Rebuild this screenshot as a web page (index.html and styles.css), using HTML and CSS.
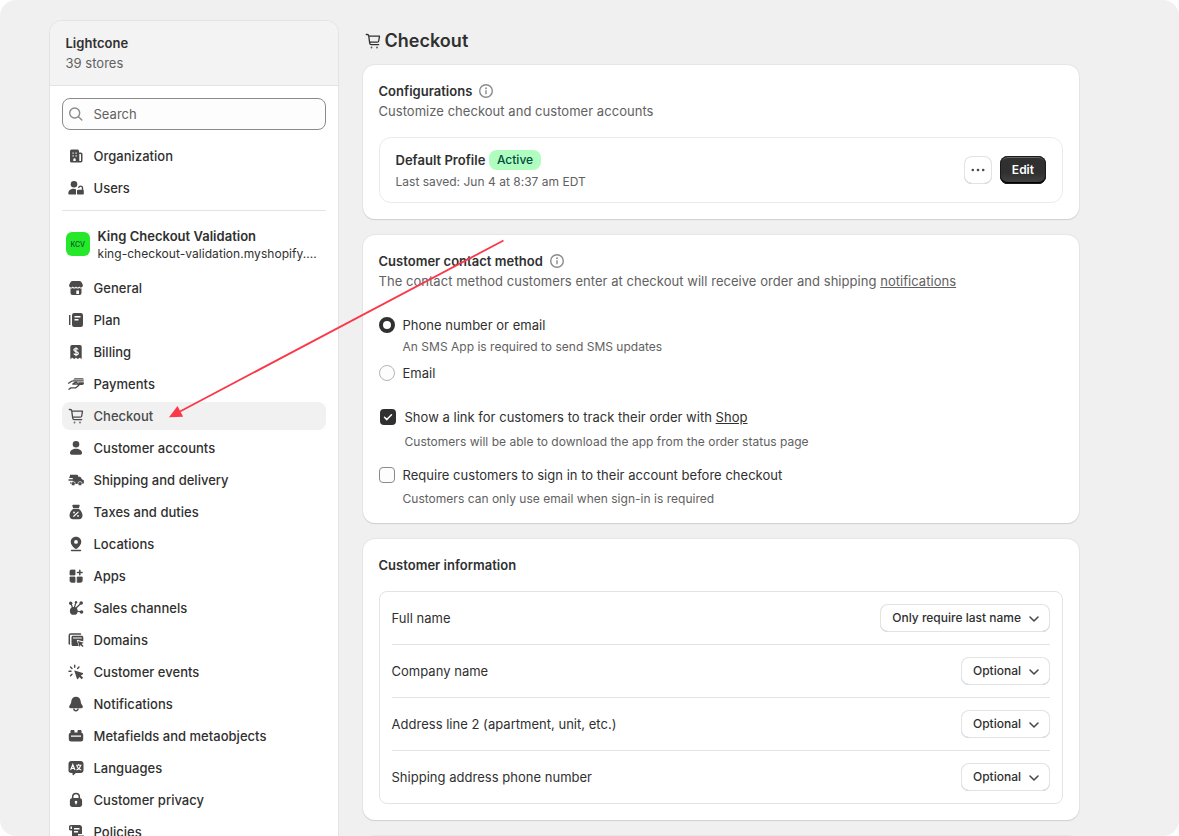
FILE: index.html
```
<!DOCTYPE html>
<html lang="en">
<head>
	<meta charset="UTF-8">
	<meta name="viewport" content="width=device-width, initial-scale=1.0">
	<link rel="stylesheet" href="styles.css">
	<title>Settings | Checkout</title>
</head>
<body>
	<svg class="sprite" aria-hidden="true">
		<symbol id="cart" viewBox="0 0 20 20">
			<path d="M3.300 3.500h1c.8 0 1.300.5 1.400 1.200l1 7.500c.1.800.7 1.400 1.500 1.400h7.500M5.800 5.200h10.700l-.8 4.800c-.1.700-.6 1.100-1.300 1.100H6.600" fill="none" stroke="currentColor" stroke-width="1.300" stroke-linecap="round" stroke-linejoin="round"/>
			<circle cx="8.500" cy="16.500" r=".9" opacity=".8"/><circle cx="14" cy="16.500" r=".9" opacity=".8"/>
		</symbol>
		<symbol id="info" viewBox="0 0 20 20">
			<circle cx="10" cy="10" r="6.300" fill="none" stroke="currentColor" stroke-width="1.400"/>
			<path d="M9.300 9.300h1.400v4H9.300z"/><circle cx="10" cy="7.200" r=".95"/>
		</symbol>
		<symbol id="down" viewBox="0 0 20 20">
			<path d="M6 9l4 4 4-4" fill="none" stroke="currentColor" stroke-width="1.600" stroke-linecap="round" stroke-linejoin="round"/>
		</symbol>
	</svg>
	<div class="page">
		<div class="sidebar">
			<div class="side-head">
				<h3>Lightcone</h3>
				<p>39 stores</p>
			</div>
			<div class="side-body">
				<div class="search">
					<svg class="icon" viewBox="0 0 20 20"><path d="M13.700 9a5 5 0 1 1-10 0 5 5 0 0 1 10 0zM12.500 12.700l3.300 3.300" fill="none" stroke="currentColor" stroke-width="1.400" stroke-linecap="round"/></svg>
					<span>Search</span>
				</div>
				<ul class="nav">
					<li><svg class="icon" viewBox="0 0 20 20"><path fill-rule="evenodd" d="M5.500 3.500h6a1.500 1.500 0 0 1 1.500 1.500v1.500h1.800c1 0 1.700.8 1.700 1.700v6.600c0 1-.8 1.700-1.700 1.700H5.500A1.500 1.500 0 0 1 4 15V5a1.500 1.500 0 0 1 1.500-1.500zM6.500 6.500v1.200h1.200V6.500zm3 0v1.200h1.200V6.500zM6.500 9.300v1.200h1.200V9.300zm3 0v1.200h1.200V9.300zM7.300 15h2.400v-1.500a1.200 1.200 0 0 0-2.400 0zM13.300 8v7h1.100c.4 0 .6-.2.6-.6V8.600c0-.4-.2-.6-.6-.6z"/></svg><span>Organization</span></li>
					<li><svg class="icon" viewBox="0 0 20 20"><circle cx="8" cy="6.200" r="3.300"/><path d="M2.300 15.200c0-2.800 2.400-4.500 5.400-4.500 1.100 0 1.900.2 2.300.5v5.300H3.500c-.7 0-1.200-.6-1.200-1.300z"/><rect x="11" y="11.700" width="6.800" height="4.900" rx="1.200"/><path d="M12.600 9.800c.3-1.200 1.100-1.700 1.900-1.700 1.100 0 2 .8 2 2v2" fill="none" stroke="currentColor" stroke-width="1.400"/></svg><span>Users</span></li>
				</ul>
				<div class="store">
					<div class="avatar">KCV</div>
					<div class="store-info">
						<h3>King Checkout Validation</h3>
						<p>king-checkout-validation.myshopify....</p>
					</div>
				</div>
				<ul class="nav">
					<li><svg class="icon" viewBox="0 0 20 20"><path d="M6.500 2.900h7c.7 0 1.300.3 1.700.9l1.500 2.700c.6 1.600-.3 3-1.900 3-.9 0-1.300-.5-1.600-1-.4.6-.9 1-1.600 1s-1.200-.4-1.600-1c-.4.6-.9 1-1.600 1s-1.200-.4-1.600-1c-.3.5-.8 1-1.700 1-1.600 0-2.400-1.400-1.800-3l1.500-2.700c.4-.6 1-.9 1.700-.9z"/><path fill-rule="evenodd" d="M4.500 10.600c1 0 1.700-.2 2.200-.6.9.7 2.300.7 3.300 0 1 .7 2.400.7 3.300 0 .5.400 1.200.6 2.200.6V15a2 2 0 0 1-2 2h-7a2 2 0 0 1-2-2zM10.300 12.500V16h2.700v-3.500z"/></svg><span>General</span></li>
					<li><svg class="icon" viewBox="0 0 20 20"><path d="M3 5h1.400v10H3z"/><path fill-rule="evenodd" d="M8.200 3h6.600A2.200 2.200 0 0 1 17 5.200v9.600a2.200 2.200 0 0 1-2.200 2.200H8.200A2.200 2.200 0 0 1 6 14.800V5.200A2.200 2.200 0 0 1 8.200 3zM8.500 6v1.400h6V6zm0 3v1.400h4V9z"/></svg><span>Plan</span></li>
					<li><svg class="icon" viewBox="0 0 20 20"><path d="M6 3h8a1.700 1.700 0 0 1 1.700 1.700V17l-2-1.300-1.800 1.300-1.900-1.300L8.100 17l-1.800-1.300-2 1.300V4.700A1.700 1.700 0 0 1 6 3z"/><path d="M12.200 7.500c-.4-.7-1.200-1-2.200-1-1.200 0-2.100.6-2.100 1.500 0 2.300 4.400.8 4.400 3.200 0 1-.9 1.600-2.200 1.600-1.100 0-2-.4-2.400-1.200M10 5.200v9" fill="none" stroke="#fff" stroke-width="1.200"/></svg><span>Billing</span></li>
					<li><svg class="icon" viewBox="0 0 20 20"><path d="M8.700 4.300h7.500c1 0 1.600.5 1.700 1.300H7zM12 8.200h5.900v1c0 1-.7 1.700-1.700 1.700h-5.400l1.300-1.100c.5-.5.4-1.200-.1-1.600z"/><path d="M2.600 9.200l3-2c.5-.3 1-.4 1.500-.4H17.200M11 8.300H9.200L6.800 10h3.500c.6 0 1-.2 1.400-.5M3 15.300l2-1.400h3.500c.8 0 1.500-.2 2-.7l2.500-2.200" fill="none" stroke="currentColor" stroke-width="1.300" stroke-linecap="round" stroke-linejoin="round"/></svg><span>Payments</span></li>
					<li class="active"><svg class="icon"><use href="#cart"/></svg><span>Checkout</span></li>
					<li><svg class="icon" viewBox="0 0 20 20"><circle cx="10" cy="6.200" r="3.300"/><path d="M4 15c0-2.700 2.700-4.300 6-4.300s6 1.600 6 4.300c0 1-.6 1.700-1.600 1.700H5.600C4.600 16.700 4 16 4 15z"/></svg><span>Customer accounts</span></li>
					<li><svg class="icon" viewBox="0 0 20 20"><path d="M4 4.700h6.700c.8 0 1.500.6 1.500 1.400v.6h1.300c.7 0 1.300.4 1.600 1l.8 1.500 1.100.5c.6.200.9.700.9 1.300v1.500c0 .9-.6 1.500-1.500 1.500H4.300v-2h2.500v-1.300H2.500V9.300h4.300V8H3.300V6.500H4z"/><circle cx="7.200" cy="13.700" r="2.100" stroke="#fff" stroke-width=".7"/><circle cx="14" cy="13.700" r="2.100" stroke="#fff" stroke-width=".7"/></svg><span>Shipping and delivery</span></li>
					<li><svg class="icon" viewBox="0 0 20 20"><path d="M7.300 2.700h5.400c.8 0 1.200.7.900 1.400L12.800 6.300H7.200l-.8-2.200c-.3-.7.1-1.400.9-1.400zM7 7h6c2 1.500 3.500 4 3.500 6.500 0 2.300-1.400 3.800-3.600 3.800H7.100c-2.200 0-3.600-1.500-3.600-3.800C3.500 11 5 8.500 7 7z"/><path d="M7.800 14.300l4.400-4.200" stroke="#fff" stroke-width="1.200" stroke-linecap="round"/><circle cx="8" cy="10.500" r=".9" fill="#fff"/><circle cx="12" cy="13.900" r=".9" fill="#fff"/></svg><span>Taxes and duties</span></li>
					<li><svg class="icon" viewBox="0 0 20 20"><path fill-rule="evenodd" d="M10 2.700c3 0 5.300 2.200 5.300 5.100 0 2.300-1.700 4.600-4.200 6.800-.7.600-1.500.6-2.200 0-2.500-2.200-4.200-4.500-4.200-6.800 0-2.900 2.300-5.100 5.300-5.100zm0 3.300a1.900 1.900 0 1 0 0 3.800A1.900 1.900 0 0 0 10 6z"/><path d="M5.500 16.500h9" stroke="currentColor" stroke-width="1.400" stroke-linecap="round"/></svg><span>Locations</span></li>
					<li><svg class="icon" viewBox="0 0 20 20"><path d="M5.200 4H9v5H4V5.200C4 4.500 4.500 4 5.200 4zM4 11h5v5.300H5.500c-.8 0-1.500-.7-1.500-1.500zM11.200 11h5v3.800c0 .8-.7 1.500-1.500 1.500h-3.500z" stroke="currentColor" stroke-width=".8" stroke-linejoin="round"/><path d="M13.800 4.200v4.600M11.500 6.500h4.600" stroke="currentColor" stroke-width="1.500" stroke-linecap="round"/></svg><span>Apps</span></li>
					<li><svg class="icon" viewBox="0 0 20 20"><path d="M7.500 12.500L5 5.500M7.500 12.500L9.800 5M7.500 12.500L15 5.300M7.500 12.500l8 1.500" stroke="currentColor" stroke-width="1.200"/><circle cx="7.800" cy="12.900" r="3.900"/><circle cx="4.700" cy="5.300" r="1.700"/><circle cx="10" cy="4.200" r="1.200"/><circle cx="15.200" cy="5" r="1.800"/><circle cx="15.500" cy="14" r="1.800"/></svg><span>Sales channels</span></li>
					<li><svg class="icon" viewBox="0 0 20 20"><path d="M3.300 14V5.500c0-.8.700-1.500 1.500-1.500h9.700" fill="none" stroke="currentColor" stroke-width="1.500" stroke-linecap="round"/><path fill-rule="evenodd" d="M7 5.800h8.800c.8 0 1.500.7 1.500 1.500v4l-6.600-1.600 2 6.300H7c-.8 0-1.500-.7-1.500-1.500V7.300c0-.8.700-1.500 1.500-1.500zM7 7.500v.9h8.800v-.9z"/><path d="M11.800 10.900l5.900 1.800-2.100 1.200 2 2-1.100 1-2-2-1 2z"/></svg><span>Domains</span></li>
					<li><svg class="icon" viewBox="0 0 20 20"><path d="M8.700 8.500l8 2.500c.6.200.6.900.1 1.200l-2 1.200 2.300 2.300-1.500 1.500-2.300-2.300-1.200 2c-.3.500-1 .5-1.200-.1l-2.500-7.900c-.1-.3.100-.5.300-.4z"/><path d="M8.700 3.200v2M3 9.300h2M4.500 5l1.500 1.500M13 5l-1.400 1.500M4.500 13.800L6 12.300" stroke="currentColor" stroke-width="1.400" stroke-linecap="round"/></svg><span>Customer events</span></li>
					<li><svg class="icon" viewBox="0 0 20 20"><path d="M10 2.800c2.700 0 4.500 1.900 4.700 4.500.1 1.900.7 3 1.700 4.100.9 1 .5 2.900-1.100 2.900H4.700c-1.600 0-2-1.900-1.100-2.900 1-1.100 1.600-2.200 1.700-4.100.2-2.600 2-4.500 4.700-4.500z"/><path d="M7.800 14.500a2.200 2.200 0 0 0 4.400 0" fill="none" stroke="currentColor" stroke-width="1.400"/></svg><span>Notifications</span></li>
					<li><svg class="icon" viewBox="0 0 20 20"><path d="M4.500 5.200c0-.7.500-1.200 1.200-1.200h1.600c.7 0 1.200.5 1.200 1.200v1.300h3V5.200c0-.7.500-1.200 1.200-1.200h1.600c.7 0 1.200.5 1.200 1.200v1.500c1 .2 1.700 1 1.700 2v.8H2.800v-.8c0-1 .7-1.800 1.700-2zM2.800 9.500h2.200v1.200h10V9.500h2.200V13a2.500 2.500 0 0 1-2.500 2.500H5.300A2.500 2.500 0 0 1 2.800 13z"/></svg><span>Metafields and metaobjects</span></li>
					<li><svg class="icon" viewBox="0 0 20 20"><path d="M5.200 3h9.600c1.500 0 2.700 1.200 2.700 2.700v6.600c0 1.500-1.200 2.700-2.700 2.700h-5L7.700 17c-.5.500-1.200.2-1.200-.5V15H5.200a2.700 2.700 0 0 1-2.700-2.700V5.700C2.500 4.200 3.700 3 5.200 3z"/><path d="M4.600 12l2.200-5.500L9 12M5.400 10.400h2.900M10 7.300h5.500M12.700 6v1.300M14.500 7.500c-.3 2-1.800 3.800-4 4.500M11 8c.4 1.800 2 3.400 4.300 4" fill="none" stroke="#fff" stroke-width="1.100"/></svg><span>Languages</span></li>
					<li><svg class="icon" viewBox="0 0 20 20"><path d="M6.700 9V6.700a3.300 3.300 0 0 1 6.600 0V9" fill="none" stroke="currentColor" stroke-width="1.500"/><path fill-rule="evenodd" d="M6.500 8h7c1.500 0 2.600 1.100 2.600 2.500v4c0 1.400-1.100 2.500-2.600 2.500h-7c-1.500 0-2.600-1.100-2.600-2.500v-4C3.900 9.100 5 8 6.500 8zM10 10.700a1.300 1.300 0 0 0-.7 2.400v1.100h1.400v-1.100a1.300 1.300 0 0 0-.7-2.400z"/></svg><span>Customer privacy</span></li>
					<li><svg class="icon" viewBox="0 0 20 20"><path fill-rule="evenodd" d="M4.800 3h8.700C14.900 3 16 4.100 16 5.500V12h-4v5H8.500A2.500 2.500 0 0 1 6 14.500V8.500H4.200C3.500 8.500 3 8 3 7.300V4.800C3 3.800 3.800 3 4.800 3zM4.500 4.500V7H6V4.500zM8 6v1.400h5.500V6zm0 3v1.400h4V9z"/><path d="M10 13.500h8v1a2.500 2.500 0 0 1-2.500 2.500H8.500z"/></svg><span>Policies</span></li>
				</ul>
			</div>
		</div>
		<div class="main">
			<h1><svg class="icon"><use href="#cart"/></svg><span>Checkout</span></h1>

			<div class="card">
				<h3>Configurations <svg class="icon info"><use href="#info"/></svg></h3>
				<p class="desc">Customize checkout and customer accounts</p>
				<div class="profile">
					<div class="profile-info">
						<div class="profile-name"><b>Default Profile</b><span class="badge">Active</span></div>
						<p class="small">Last saved: Jun 4 at 8:37 am EDT</p>
					</div>
					<button class="btn dots"><svg class="icon" viewBox="0 0 20 20"><circle cx="4.800" cy="10" r="1.300"/><circle cx="10" cy="10" r="1.300"/><circle cx="15.200" cy="10" r="1.300"/></svg></button>
					<button class="btn dark">Edit</button>
				</div>
			</div>

			<div class="card contact">
				<h3>Customer contact method <svg class="icon info"><use href="#info"/></svg></h3>
				<p class="desc">The contact method customers enter at checkout will receive order and shipping <a>notifications</a></p>
				<div class="option first">
					<span class="radio checked"></span><span>Phone number or email</span>
				</div>
				<p class="small help">An SMS App is required to send SMS updates</p>
				<div class="option email">
					<span class="radio"></span><span>Email</span>
				</div>
				<div class="option track">
					<span class="check checked"><svg viewBox="0 0 16 16"><path d="M4.500 8.300l2.300 2.300 4.700-4.800" fill="none" stroke="#fff" stroke-width="1.500" stroke-linecap="round" stroke-linejoin="round"/></svg></span><span>Show a link for customers to track their order with <a>Shop</a></span>
				</div>
				<p class="small help track-help">Customers will be able to download the app from the order status page</p>
				<div class="option signin">
					<span class="check"></span><span>Require customers to sign in to their account before checkout</span>
				</div>
				<p class="small help signin-help">Customers can only use email when sign-in is required</p>
			</div>

			<div class="card">
				<h3>Customer information</h3>
				<div class="fields">
					<div class="field"><span>Full name</span><button class="btn">Only require last name<svg class="icon"><use href="#down"/></svg></button></div>
					<div class="field"><span>Company name</span><button class="btn">Optional<svg class="icon"><use href="#down"/></svg></button></div>
					<div class="field"><span>Address line 2 (apartment, unit, etc.)</span><button class="btn">Optional<svg class="icon"><use href="#down"/></svg></button></div>
					<div class="field"><span>Shipping address phone number</span><button class="btn">Optional<svg class="icon"><use href="#down"/></svg></button></div>
				</div>
			</div>

			<div class="card"></div>
		</div>
		<svg class="arrow" viewBox="0 0 1179 836">
			<path d="M503.500 240.500L180 411.500" stroke="#fb3748" stroke-width="1.800"/>
			<path d="M169 417.300l8.500-11.200 5.600 10.600z" fill="#fb3748"/>
		</svg>
	</div>
</body>
</html>
```
FILE: styles.css
```
*{
	padding: 0;
	margin: 0;
	box-sizing: border-box;
	font-family: Inter, 'Liberation Sans', sans-serif;
}
body{
	height: 836px;
	overflow: hidden;
	background-color: #fff;
	color: #303030;
	font-size: 13px;
	line-height: 20px;
	letter-spacing: .02px;
	text-indent: -.5px;
}
.sprite{
	display: none;
}
.page{
	position: relative;
	display: flex;
	gap: 25px;
	height: 836px;
	padding: 21px 0 0 50px;
	background-color: #f0f0f0;
	border-radius: 16px;
	overflow: hidden;
}
.icon{
	width: 20px;
	height: 20px;
	flex-shrink: 0;
	fill: currentColor;
	color: #4a4a4a;
}
h3{
	font-size: 13px;
	font-weight: 600;
	line-height: 20px;
}
.sidebar{
	width: 288px;
	height: 900px;
	flex-shrink: 0;
	background-color: #fff;
	border-radius: 12px;
	box-shadow: 0 0 0 1px #e3e3e3;
	overflow: hidden;
}
.side-head{
	height: 65px;
	padding: 12px 16px;
	background-color: #f3f3f3;
	border-bottom: 1px solid #e3e3e3;
}
.side-head p{
	color: #616161;
}
.side-body{
	padding: 12px;
}
.search{
	display: flex;
	align-items: center;
	gap: 8px;
	height: 32px;
	padding-left: 3px;
	background-color: #fdfdfd;
	border: 1px solid #8a8a8a;
	border-radius: 8px;
	color: #616161;
}
.search .icon{
	color: #8a8a8a;
}
.nav{
	display: flex;
	flex-direction: column;
	gap: 4px;
	margin-top: 12px;
	list-style: none;
}
.nav li{
	display: flex;
	align-items: center;
	gap: 8px;
	height: 28px;
	padding-left: 4px;
	border-radius: 8px;
	font-weight: 500;
}
.nav li span, .search span, .option span, .field span, h1 span{
	display: block;
}
.nav .active{
	background-color: #f1f1f1;
	color: #4a4a4a;
}
.store{
	display: flex;
	align-items: center;
	gap: 8px;
	height: 64px;
	margin-top: 8px;
	padding: 4px 4px 0;
	border-top: 1px solid #e3e3e3;
}
.store + .nav{
	margin-top: 0;
}
.avatar{
	width: 24px;
	height: 24px;
	margin-bottom: 2px;
	background-color: #25e82b;
	border-radius: 6px;
	color: #0a5a2a;
	font-size: 7px;
	font-weight: 500;
	line-height: 25px;
	text-align: center;
}
.store-info h3, .store-info p{
	line-height: 17px;
	white-space: nowrap;
}
.store-info p{
	font-size: 12px;
	letter-spacing: .05px;
}
.main{
	width: 716px;
	display: flex;
	flex-direction: column;
}
.main > *{
	flex-shrink: 0;
}
h1{
	display: flex;
	align-items: center;
	gap: 2px;
	height: 40px;
	margin-bottom: 4px;
	font-size: 18px;
	font-weight: 600;
}
h1 .icon{
	color: #303030;
}
.card{
	margin-bottom: 16px;
	padding: 16px;
	background-color: #fff;
	border-radius: 12px;
	box-shadow: 0 1px 1px #d0d0d0, 0 0 0 1px #e6e6e6;
}
.card h3{
	display: flex;
	align-items: center;
	gap: 4px;
}
.info{
	color: #8a8a8a;
}
.desc, .small{
	color: #616161;
}
.desc{
	letter-spacing: .04px;
}
.small{
	font-size: 12px;
}
a{
	text-decoration: underline;
}
.profile{
	display: flex;
	align-items: center;
	gap: 8px;
	height: 66px;
	margin-top: 16px;
	padding: 0 16px;
	border: 1px solid #ebebeb;
	border-radius: 12px;
}
.profile-info{
	flex: 1;
	align-self: flex-start;
	padding-top: 12px;
}
.profile-info .small{
	margin-top: 2px;
}
.profile-name{
	display: flex;
	align-items: center;
	gap: 4px;
}
.profile-name b{
	font-weight: 600;
}
.badge{
	padding: 0 8px;
	background-color: #affebf;
	border-radius: 8px;
	color: #014b40;
	font-size: 12px;
	font-weight: 500;
}
.btn{
	display: flex;
	align-items: center;
	gap: 3px;
	height: 28px;
	padding: 0 6px 1px 12px;
	background-color: #fff;
	border: none;
	border-radius: 8px;
	box-shadow: inset 0 0 0 1px #e3e3e3, inset 0 -1px 0 #b5b5b5;
	color: #303030;
	font-size: 12px;
	font-weight: 500;
}
.dots{
	padding: 0 4px;
}
.dark{
	padding: 0 12px 1px;
	background: linear-gradient(#303030 60%, #454545);
	box-shadow: inset 0 0 0 1px #1a1a1a, inset 0 -2px 0 #000, inset 0 2px 0 #666;
	color: #fff;
	font-weight: 600;
}
.contact{
	height: 288px;
}
.option{
	display: flex;
	align-items: center;
	gap: 8px;
	height: 20px;
}
.first{
	margin-top: 24px;
}
.radio, .check{
	width: 16px;
	height: 16px;
	background-color: #fdfdfd;
	border: 1px solid #8a8a8a;
	border-radius: 4px;
}
.radio{
	border-color: #b5b5b5;
	border-radius: 50%;
}
.radio.checked{
	background-color: #fff;
	border: 4px solid #303030;
}
.check.checked{
	background-color: #303030;
	border: none;
}
.check svg{
	display: block;
}
.help{
	margin: 2px 0 0 24px;
}
.email{
	margin-top: 6px;
}
.track{
	margin: 24px 0 0 1px;
	gap: 9px;
}
.track-help{
	margin: 5px 0 0 26px;
}
.signin{
	margin-top: 13px;
}
.signin-help{
	margin-top: 4px;
}
.fields{
	margin-top: 16px;
	padding: 0 12px;
	border: 1px solid #e3e3e3;
	border-radius: 8px;
}
.field{
	display: flex;
	align-items: center;
	justify-content: space-between;
	height: 53px;
	border-bottom: 1px solid #e3e3e3;
}
.field:last-child{
	height: 52px;
	border-bottom: none;
}
/* pointer to the active menu item */
.arrow{
	position: absolute;
	top: 0;
	left: 0;
	width: 1179px;
	height: 836px;
}
```
